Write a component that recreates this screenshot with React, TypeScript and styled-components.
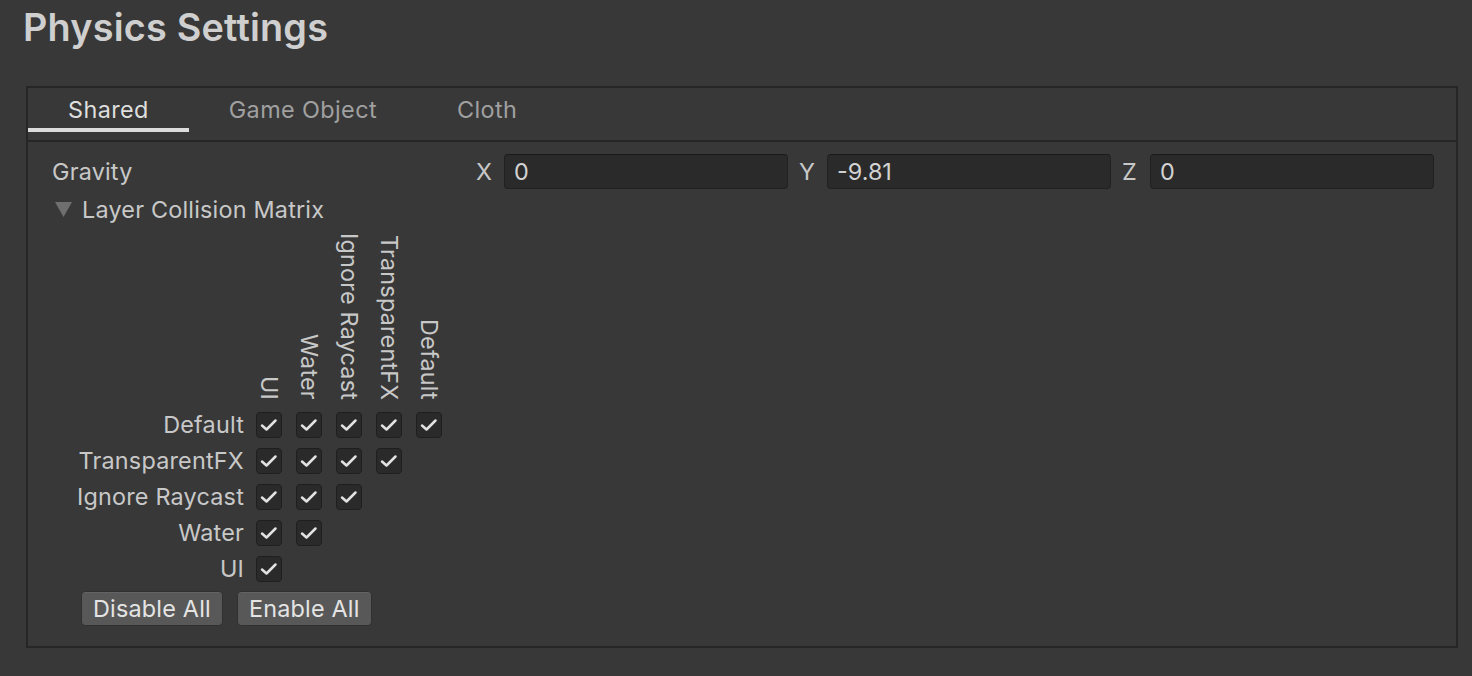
import React from 'react';
import styled, { createGlobalStyle } from 'styled-components';

const GlobalStyle = createGlobalStyle`
  html, body {
    margin: 0;
    padding: 0;
    background-color: #383838;
  }
  body {
    font-family: Inter, "Noto Sans", sans-serif;
    color: #c8c8c8;
  }
`;

const Page = styled.div`
  width: 1472px;
  height: 676px;
  box-sizing: border-box;
  padding: 0 14px 0 26px;
  overflow: hidden;
`;

const Title = styled.h1`
  margin: 0 0 0 -3px;
  height: 86px;
  box-sizing: border-box;
  padding-top: 4px;
  font-size: 37.8px;
  font-weight: 600;
  color: #cfcfcf;
  letter-spacing: 0.2px;
`;

const Panel = styled.div`
  border: 2px solid #262626;
  height: 562px;
  box-sizing: border-box;
  display: flex;
  flex-direction: column;
`;

const TabBar = styled.div`
  display: flex;
  align-items: flex-start;
  height: 54px;
  box-sizing: border-box;
  border-bottom: 2px solid #262626;
`;

const Tab = styled.div<{ active?: boolean }>`
  height: 44px;
  box-sizing: border-box;
  padding: 3px 40px 0;
  display: flex;
  align-items: center;
  font-size: 23.4px;
  color: ${p => (p.active ? '#dedede' : '#a0a0a0')};
  border-bottom: 4px solid ${p => (p.active ? '#dcdcdc' : 'transparent')};
  letter-spacing: 0.4px;
`;

const Content = styled.div`
  padding: 10px 22px 0 24px;
  display: flex;
  flex-direction: column;
`;

const FieldRow = styled.div`
  display: flex;
  align-items: center;
  height: 38px;
`;

const FieldLabel = styled.div`
  width: 420px;
  font-size: 23.4px;
  letter-spacing: 0.2px;
`;

const VectorGroup = styled.div`
  flex: 1;
  display: flex;
  gap: 7px;
`;

const Axis = styled.div`
  flex: 1;
  display: flex;
  align-items: center;
`;

const AxisLabel = styled.span`
  width: 32px;
  padding-left: 4px;
  box-sizing: border-box;
  font-size: 23.4px;
  color: #c8c8c8;
`;

const NumberField = styled.div`
  flex: 1;
  height: 35px;
  box-sizing: border-box;
  background-color: #2a2a2a;
  border: 1px solid #212121;
  border-top-color: #1a1a1a;
  border-radius: 4px;
  display: flex;
  align-items: center;
  padding-left: 9px;
  font-size: 23.4px;
  color: #d2d2d2;
`;

const Foldout = styled.div`
  display: flex;
  align-items: center;
  gap: 10px;
  height: 38px;
  font-size: 23.4px;
  letter-spacing: 0.2px;
  padding-left: 3px;
`;

const Arrow = styled.svg`
  width: 17px;
  height: 15px;
  flex-shrink: 0;
`;

const Matrix = styled.div`
  display: grid;
  grid-template-columns: 192px repeat(5, 26px);
  column-gap: 14px;
  row-gap: 10px;
  margin-top: 5px;
  margin-left: -2px;
  align-items: center;
`;

const ColumnHeader = styled.div`
  writing-mode: vertical-rl;
  font-size: 23.4px;
  line-height: 26px;
  align-self: end;
  justify-self: center;
  letter-spacing: 0.2px;
  margin-bottom: 2px;
  color: #c8c8c8;
`;

const RowLabel = styled.div`
  text-align: right;
  font-size: 23.4px;
  letter-spacing: 0.2px;
  line-height: 26px;
  margin-right: -2px;
`;

const CheckBox = styled.div`
  width: 26px;
  height: 26px;
  box-sizing: border-box;
  background-color: #2a2a2a;
  border: 1px solid #1f1f1f;
  border-radius: 4px;
  display: flex;
  align-items: center;
  justify-content: center;
`;

const ButtonRow = styled.div`
  display: flex;
  gap: 14px;
  margin-top: 9px;
  padding-left: 29px;
`;

const Button = styled.button`
  height: 35px;
  margin: 0;
  padding: 0 11px;
  background-color: #585858;
  border: 1px solid #303030;
  border-radius: 4px;
  color: #e4e4e4;
  font-family: Inter, "Noto Sans", sans-serif;
  font-size: 23.4px;
  letter-spacing: 0.2px;
  box-shadow: inset 0 1px 0 #636363;
`;

const layers = ['Default', 'TransparentFX', 'Ignore Raycast', 'Water', 'UI'];
const columns = [...layers].reverse();

const Check = () => (
  <svg width="18" height="14" viewBox="0 0 18 14">
    <polyline
      points="2,7.5 6.5,11.5 15.5,2.5"
      fill="none"
      stroke="#e2e2e2"
      strokeWidth="2.5"
      strokeLinecap="round"
      strokeLinejoin="round"
    />
  </svg>
);

const App: React.FC = () => {
  return (
    <Page>
      <GlobalStyle />
      <Title>Physics Settings</Title>
      <Panel>
        <TabBar>
          <Tab active>Shared</Tab>
          <Tab>Game Object</Tab>
          <Tab>Cloth</Tab>
        </TabBar>
        <Content>
          <FieldRow>
            <FieldLabel>Gravity</FieldLabel>
            <VectorGroup>
              <Axis>
                <AxisLabel>X</AxisLabel>
                <NumberField>0</NumberField>
              </Axis>
              <Axis>
                <AxisLabel>Y</AxisLabel>
                <NumberField>-9.81</NumberField>
              </Axis>
              <Axis>
                <AxisLabel>Z</AxisLabel>
                <NumberField>0</NumberField>
              </Axis>
            </VectorGroup>
          </FieldRow>
          <Foldout>
            <Arrow viewBox="0 0 17 15">
              <polygon points="0,0 17,0 8.5,15" fill="#6f6f6f" />
            </Arrow>
            Layer Collision Matrix
          </Foldout>
          <Matrix>
            <div />
            {columns.map(c => (
              <ColumnHeader key={c}>{c}</ColumnHeader>
            ))}
            {layers.map((row, r) => (
              <React.Fragment key={row}>
                <RowLabel>{row}</RowLabel>
                {columns.map((c, i) =>
                  i < layers.length - r ? (
                    <CheckBox key={c}>
                      <Check />
                    </CheckBox>
                  ) : (
                    <div key={c} />
                  )
                )}
              </React.Fragment>
            ))}
          </Matrix>
          <ButtonRow>
            <Button>Disable All</Button>
            <Button>Enable All</Button>
          </ButtonRow>
        </Content>
      </Panel>
    </Page>
  );
};

export default App;
